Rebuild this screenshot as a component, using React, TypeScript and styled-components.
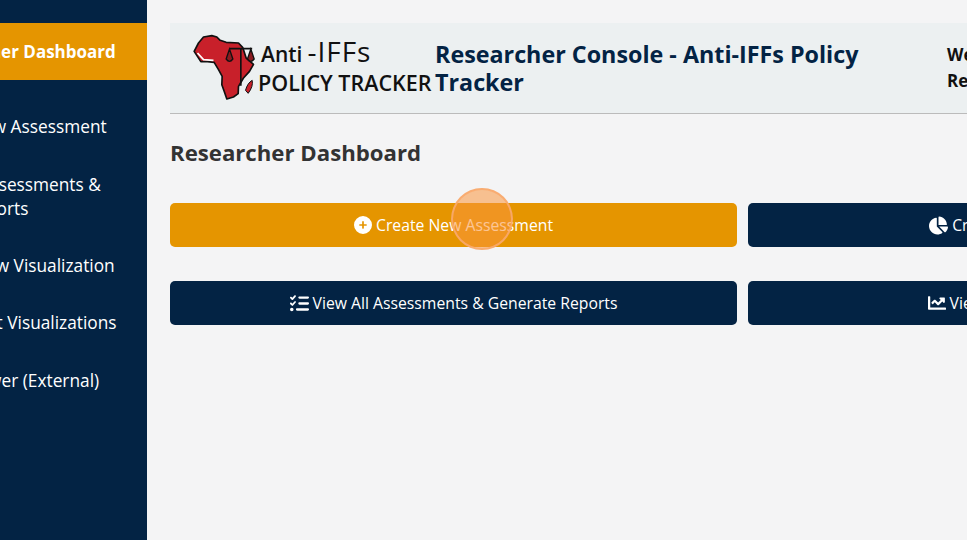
import { styled, createGlobalStyle } from "styled-components";
import { FaChartLine, FaChartPie } from "react-icons/fa";
import { FaCirclePlus, FaListCheck } from "react-icons/fa6";

const navItems = [
  "View Researcher Dashboard",
  "Prepare a New Assessment",
  "Download Assessments & Reports",
  "Generate a New Visualization",
  "Manage Project Visualizations",
  "Country Viewer (External)",
];

function Logo() {
  return (
    <LogoWrapper>
      <LogoMark viewBox="60 40 200 210">
        <path
          d="M72 95 L85 70 L100 52 L125 48 L140 52 L150 62 L168 68 L205 70 L218 84 L228 115 L250 134 L238 155 L220 175 L205 200 L204 222 L190 232 L170 238 L162 215 L155 195 L156 170 L145 150 L132 128 L112 126 L92 126 Z"
          fill="#c8202a"
          stroke="#111"
          strokeWidth="5"
          strokeLinejoin="round"
        />
        <path d="M82 100 L100 120 L130 122" fill="none" stroke="#fff" strokeWidth="5" />
        <path d="M226 212 Q232 190 246 182 Q250 200 234 221 Z" fill="#c8202a" stroke="#111" strokeWidth="3" />
        <path d="M212 86 L212 198 M178 87 L246 87" fill="none" stroke="#111" strokeWidth="5" />
        <path d="M178 88 L168 118 Q178 132 188 118 Z M242 88 L232 118 Q242 132 252 118 Z" fill="#8a1a20" stroke="#111" strokeWidth="4" />
      </LogoMark>
      <LogoText>
        <LogoTop>
          <LogoAnti>Anti</LogoAnti>
          <LogoIffs>-IFFs</LogoIffs>
        </LogoTop>
        <LogoBottom>POLICY TRACKER</LogoBottom>
      </LogoText>
    </LogoWrapper>
  );
}

function App() {
  return (
    <>
      <GlobalStyle />
      <Page>
        <Sidebar>
          <NavList>
            {navItems.map((item, index) => (
              <NavItem key={item} $active={index === 0}>
                {item}
              </NavItem>
            ))}
          </NavList>
        </Sidebar>
        <Main>
          <Header>
            <Logo />
            <Title>Researcher Console - Anti-IFFs Policy Tracker</Title>
            <UserInfo>
              <div>Welcome</div>
              <div>Researcher</div>
            </UserInfo>
          </Header>
          <Heading>Researcher Dashboard</Heading>
          <ButtonGrid>
            <ActionButton $primary>
              <FaCirclePlus size={18} />
              Create New Assessment
              <ClickMarker />
            </ActionButton>
            <ActionButton>
              <FaChartPie size={19} />
              Create New Visualization
            </ActionButton>
            <ActionButton>
              <FaListCheck size={19} />
              View All Assessments &amp; Generate Reports
            </ActionButton>
            <ActionButton>
              <FaChartLine size={18} />
              View Saved Visualizations
            </ActionButton>
          </ButtonGrid>
        </Main>
      </Page>
    </>
  );
}

export default App;

const GlobalStyle = createGlobalStyle`
  html, body {
    margin: 0;
    height: 100%;
    overflow: hidden;
    background: #f4f4f5;
  }
  body {
    font-family: "Open Sans", "Noto Sans", sans-serif;
  }
`;

const Page = styled.div`
  display: flex;
  width: 1338px;
  height: 540px;
`;

const Sidebar = styled.aside`
  flex: 0 0 147px;
  background: #032344;
  overflow: hidden;
  padding-top: 23px;
`;

/* the page is scrolled sideways in the reference, so the centred labels start left of the frame */
const NavList = styled.nav`
  display: flex;
  flex-direction: column;
  width: 300px;
  margin-left: -150px;
`;

const NavItem = styled.div<{ $active?: boolean }>`
  padding: ${(p) => (p.$active ? "17px 30px 16px 24px" : "16.7px 30px 16.7px 24px")};
  margin-bottom: ${(p) => (p.$active ? "18.6px" : "0")};
  font-size: ${(p) => (p.$active ? "17px" : "17.3px")};
  line-height: 24px;
  text-align: center;
  font-weight: ${(p) => (p.$active ? 700 : 500)};
  color: #fff;
  background: ${(p) => (p.$active ? "#e59500" : "transparent")};
`;

const Main = styled.main`
  flex: 1;
  padding: 23px 0 0 23px;
`;

const Header = styled.header`
  display: flex;
  align-items: center;
  height: 90px;
  background: #ecf0f1;
  border-bottom: 1px solid #bbb;
`;

const LogoWrapper = styled.div`
  display: flex;
  align-items: flex-start;
  flex: 0 0 265px;
  height: 70px;
  margin-top: -1px;
  padding-left: 20px;
  box-sizing: border-box;
`;

const LogoMark = styled.svg`
  width: 67px;
  height: 70px;
  flex: none;
`;

const LogoText = styled.div`
  margin-left: 2px;
  color: #111;
  white-space: nowrap;
`;

const LogoTop = styled.div`
  display: flex;
  align-items: baseline;
  height: 36px;
  line-height: 36px;
  padding-left: 2px;
`;

const LogoAnti = styled.span`
  font-size: 21px;
  font-weight: 600;
  margin-right: 5px;
`;

const LogoIffs = styled.span`
  font-size: 28px;
  font-weight: 400;
  letter-spacing: 1px;
`;

const LogoBottom = styled.div`
  font-size: 21.5px;
  font-weight: 600;
  line-height: 28px;
  margin-left: -1px;
`;

const Title = styled.h1`
  flex: 0 0 495px;
  margin: 0;
  font-size: 23.3px;
  line-height: 28px;
  font-weight: 700;
  color: #032344;
`;

const UserInfo = styled.div`
  margin-left: 17px;
  font-size: 17px;
  line-height: 26px;
  font-weight: 700;
  color: #111;
  white-space: nowrap;
`;

const Heading = styled.h2`
  margin: 23px 0 34px;
  font-size: 22.2px;
  line-height: 32px;
  font-weight: 700;
  color: #333;
`;

const ButtonGrid = styled.div`
  display: grid;
  grid-template-columns: 567px 567px;
  column-gap: 11px;
  row-gap: 34px;
`;

const ActionButton = styled.div<{ $primary?: boolean }>`
  position: relative;
  display: flex;
  align-items: center;
  justify-content: center;
  gap: 4px;
  height: 44px;
  border-radius: 5px;
  background: ${(p) => (p.$primary ? "#e59500" : "#032344")};
  color: #fff;
  font-size: 15.75px;
  font-weight: 500;
`;

const ClickMarker = styled.span`
  position: absolute;
  left: 281px;
  top: -15px;
  width: 58px;
  height: 58px;
  border-radius: 50%;
  background: rgba(250, 150, 60, 0.55);
  border: 2px solid rgba(250, 170, 110, 0.9);
`;
